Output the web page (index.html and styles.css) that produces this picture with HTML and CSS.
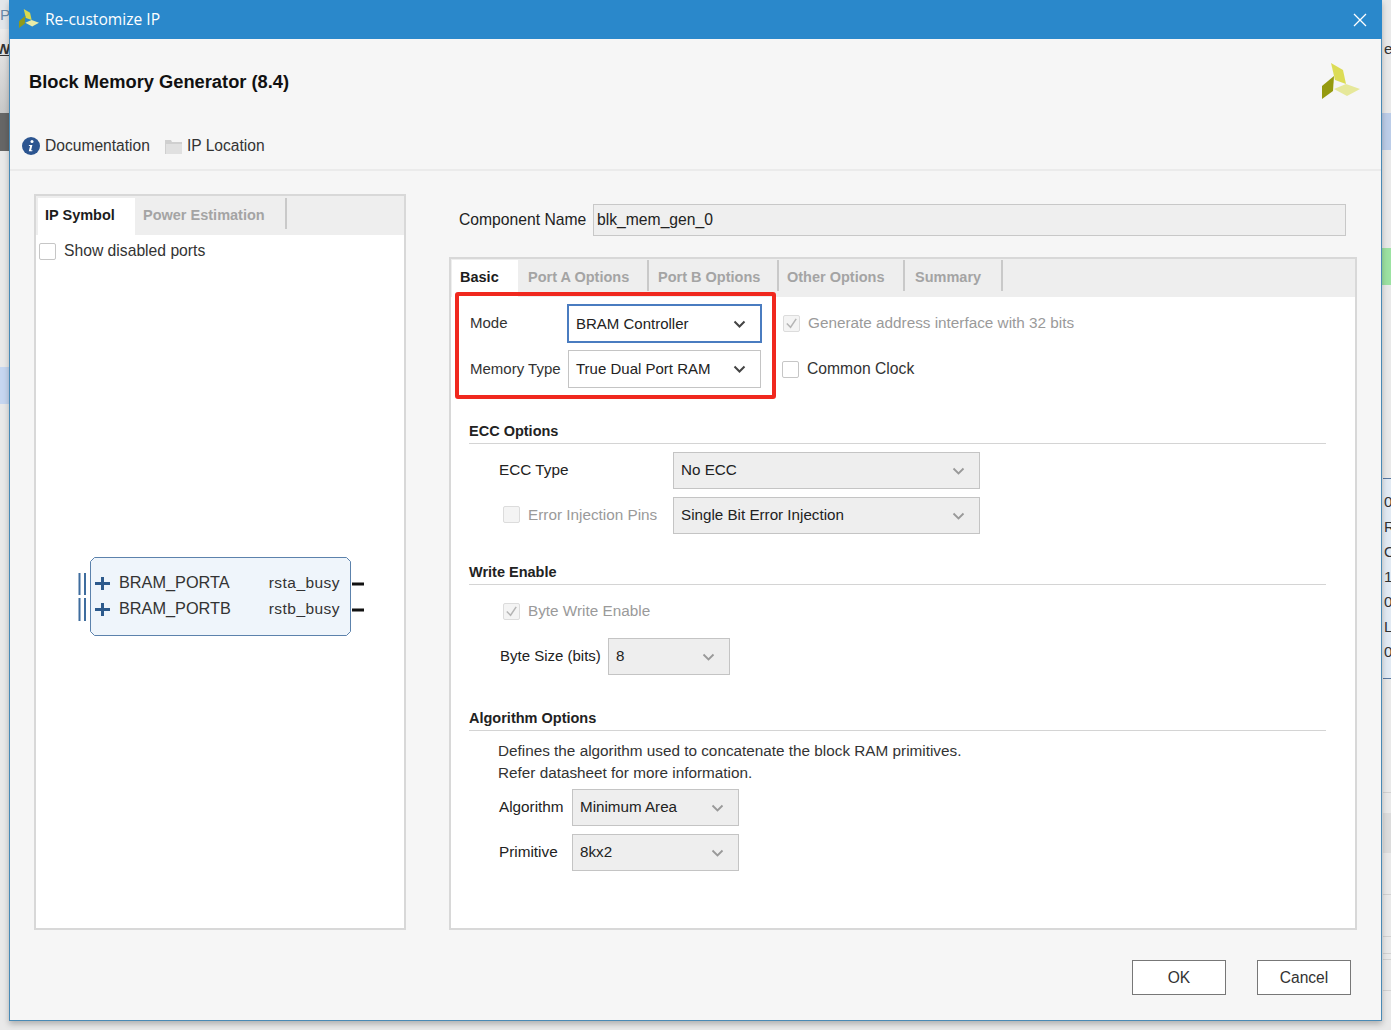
FILE: index.html
```html
<!DOCTYPE html>
<html lang="en">
<head>
  <meta charset="UTF-8">
  <title>Re-customize IP</title>
  <link rel="stylesheet" href="styles.css">
</head>
<body>
  <!-- bits of the main window showing behind the dialog -->
  <div class="bg-bit left-p">P</div>
  <div class="bg-bit left-top"></div>
  <div class="bg-bit left-wi">Wi</div>
  <div class="bg-bit left-dark"></div>
  <div class="bg-bit left-blue"></div>
  <div class="bg-bit right-e">e</div>
  <div class="bg-bit right-blue"></div>
  <div class="bg-bit right-green"></div>
  <div class="bg-bit right-table">0<br>R<br>O<br>1<br>0<br>L<br>0</div>
  <div class="bg-bit right-rule rule-a"></div>
  <div class="bg-bit right-band"></div>
  <div class="bg-bit right-rule rule-b"></div>
  <div class="bg-bit right-rule rule-c"></div>

  <div class="dialog">
    <div class="titlebar">
      <svg class="title-logo" viewBox="0 0 38 36">
        <path d="M9 0l12 7 3 14-11-4z" fill="#d9da50"/>
        <path d="M0 23l12-10-1 15-11 8z" fill="#8f9a1c"/>
        <path d="M12 26l12-5 14 5-13 7z" fill="#e8eca8"/>
      </svg>
      <span class="title-text">Re-customize IP</span>
      <svg class="title-close" viewBox="0 0 14 14">
        <path d="M1 1l12 12M13 1L1 13" stroke="#fff" stroke-width="1.3" fill="none"/>
      </svg>
    </div>

    <div class="header">
      <div class="header-top">
        <h1>Block Memory Generator (8.4)</h1>
        <svg class="big-logo" viewBox="0 0 38 36">
          <path d="M9 0l12 7 3 14-11-4z" fill="#dcdc55"/>
          <path d="M0 23l12-10-1 15-11 8z" fill="#959a10"/>
          <path d="M12 26l12-5 14 5-13 7z" fill="#e6e89a"/>
        </svg>
      </div>
      <div class="header-links">
        <span class="link">
          <svg class="info-icon" viewBox="0 0 18 18">
            <circle cx="9" cy="9" r="9" fill="#2c5590"/>
            <circle cx="10" cy="4.6" r="1.5" fill="#fff"/>
            <path d="M7 8h3.4l-1.300 5.300h1.400l-.3 1H6.800l1.300-5.300H6.800z" fill="#fff"/>
          </svg>
          Documentation
        </span>
        <span class="link">
          <svg class="folder-icon" viewBox="0 0 17 15">
            <path d="M0 1h6l1 2h10v12H0z" fill="#cfcfcf"/>
            <path d="M1 5h16v10H1z" fill="#e0e0e0"/>
          </svg>
          IP Location
        </span>
      </div>
    </div>

    <div class="main">
      <div class="panel symbol-panel">
        <div class="tabs">
          <div class="tab active">IP Symbol</div>
          <div class="tab sep">Power Estimation</div>
        </div>
        <div class="symbol-body">
          <label class="check roomy"><span class="box"></span>Show disabled ports</label>
          <svg class="symbol" width="300" height="90" viewBox="0 0 300 90">
            <path d="M17.500 6.500H269.500l4 4v70l-4 4H17.500l-4-4v-70z" fill="#eff5fb" stroke="#5c82ac"/>
            <g stroke="#3f6d9e" stroke-width="2">
              <path d="M2.500 22v22M8 22v22M2.500 47v23M8 47v23"/>
            </g>
            <g stroke="#2d5a8c" stroke-width="3">
              <path d="M25.500 26v13M18 32.500h15M25.500 52v13M18 58.500h15"/>
            </g>
            <g stroke="#111" stroke-width="3">
              <path d="M275 33h12M275 59h12"/>
            </g>
            <text x="42" y="37" class="sym-text">BRAM_PORTA</text>
            <text x="42" y="63" class="sym-text">BRAM_PORTB</text>
            <text x="263" y="37" class="sym-text sym-right">rsta_busy</text>
            <text x="263" y="63" class="sym-text sym-right">rstb_busy</text>
          </svg>
        </div>
      </div>

      <div class="config">
        <div class="name-row roomy">
          <span class="name-label">Component Name</span>
          <div class="name-input">blk_mem_gen_0</div>
        </div>
        <div class="panel config-panel">
          <div class="tabs">
            <div class="tab active basic">Basic</div>
            <div class="tab sep porta">Port A Options</div>
            <div class="tab sep portb">Port B Options</div>
            <div class="tab sep other">Other Options</div>
            <div class="tab sep summary">Summary</div>
          </div>
          <div class="config-body">
            <div class="red-box"></div>

            <div class="mode-block">
              <div class="mode-row">
                <span class="mode-label">Mode</span>
                <div class="select mode-select focused">BRAM Controller<svg class="chev" viewBox="0 0 12 8"><path d="M1 1.500l5 5 5-5" fill="none" stroke="#444" stroke-width="2"/></svg></div>
                <label class="check disabled"><span class="box"><svg viewBox="0 0 16 16"><path d="M3 8l4 4 6-9" fill="none" stroke="#b5b5b5" stroke-width="1.600"/></svg></span>Generate address interface with 32 bits</label>
              </div>
              <div class="mode-row">
                <span class="mode-label">Memory Type</span>
                <div class="select mode-select">True Dual Port RAM<svg class="chev" viewBox="0 0 12 8"><path d="M1 1.500l5 5 5-5" fill="none" stroke="#444" stroke-width="2"/></svg></div>
                <label class="check roomy"><span class="box"></span>Common Clock</label>
              </div>
            </div>

            <section class="ecc">
              <h2>ECC Options</h2>
              <div class="row">
                <span class="ecc-label">ECC Type</span>
                <div class="select gray ecc-select">No ECC<svg class="chev" viewBox="0 0 12 8"><path d="M1 1.500l5 5 5-5" fill="none" stroke="#999" stroke-width="1.800"/></svg></div>
              </div>
              <div class="row">
                <label class="check disabled ecc-label inset"><span class="box"></span>Error Injection Pins</label>
                <div class="select gray ecc-select">Single Bit Error Injection<svg class="chev" viewBox="0 0 12 8"><path d="M1 1.500l5 5 5-5" fill="none" stroke="#999" stroke-width="1.800"/></svg></div>
              </div>
            </section>

            <section class="write">
              <h2>Write Enable</h2>
              <label class="check disabled inset byte-check"><span class="box"><svg viewBox="0 0 16 16"><path d="M3 8l4 4 6-9" fill="none" stroke="#b5b5b5" stroke-width="1.600"/></svg></span>Byte Write Enable</label>
              <div class="row byte-row">
                <span class="byte-label">Byte Size (bits)</span>
                <div class="select gray byte-select">8<svg class="chev" viewBox="0 0 12 8"><path d="M1 1.500l5 5 5-5" fill="none" stroke="#999" stroke-width="1.800"/></svg></div>
              </div>
            </section>

            <section class="algo">
              <h2>Algorithm Options</h2>
              <p>Defines the algorithm used to concatenate the block RAM primitives.<br>Refer datasheet for more information.</p>
              <div class="row">
                <span class="algo-label">Algorithm</span>
                <div class="select gray algo-select">Minimum Area<svg class="chev" viewBox="0 0 12 8"><path d="M1 1.500l5 5 5-5" fill="none" stroke="#999" stroke-width="1.800"/></svg></div>
              </div>
              <div class="row">
                <span class="algo-label">Primitive</span>
                <div class="select gray algo-select">8kx2<svg class="chev" viewBox="0 0 12 8"><path d="M1 1.500l5 5 5-5" fill="none" stroke="#999" stroke-width="1.800"/></svg></div>
              </div>
            </section>
          </div>
        </div>
      </div>
    </div>

    <div class="footer">
      <button>OK</button>
      <button>Cancel</button>
    </div>
  </div>
</body>
</html>
```

FILE: styles.css
```css
* {
  box-sizing: border-box;
}

html, body {
  height: 100%;
}

body {
  margin: 0;
  background: #e9e9e9;
  overflow: hidden;
  position: relative;
  font-family: "Liberation Sans", Arial, sans-serif;
  font-size: 15.300px;
  color: #222;
}

.roomy {
  font-size: 15.700px;
}

/* main window behind the dialog */
.bg-bit {
  position: absolute;
  color: #333;
}

.left-p {
  left: 0;
  top: 0;
  width: 20px;
  height: 29px;
  line-height: 29px;
  background: #e3e6ea;
  color: #6a8aa8;
}

.left-top {
  left: 0;
  top: 29px;
  width: 20px;
  height: 84px;
  background: linear-gradient(#ececec, #c8c8c8);
}

.left-wi {
  left: -4px;
  top: 40px;
  font-weight: bold;
  text-decoration: underline;
}

.left-dark {
  left: 0;
  top: 113px;
  width: 20px;
  height: 38px;
  background: #666;
}

.left-blue {
  left: 0;
  top: 367px;
  width: 20px;
  height: 37px;
  background: #c6d6f0;
}

.right-e {
  left: 1384px;
  top: 40px;
}

.right-blue {
  left: 1370px;
  top: 113px;
  width: 21px;
  height: 37px;
  background: #bccde8;
}

.right-green {
  left: 1370px;
  top: 248px;
  width: 21px;
  height: 37px;
  background: #9ce2a2;
}

.right-table {
  left: 1383px;
  top: 478px;
  width: 8px;
  height: 201px;
  padding: 10px 0 0 1px;
  line-height: 25px;
  overflow: hidden;
  background: #e2eaf3;
  border-top: 1px solid #5878a0;
  border-bottom: 1px solid #5878a0;
}

.right-rule {
  left: 1383px;
  width: 8px;
  border-top: 1px solid #d2d2d2;
  border-bottom: 1px solid #d2d2d2;
}

.rule-a {
  top: 792px;
  height: 103px;
}

.rule-b {
  top: 936px;
  height: 18px;
}

.rule-c {
  top: 959px;
  height: 32px;
}

.right-band {
  left: 1383px;
  top: 813px;
  width: 8px;
  height: 40px;
  background: #dcdcdc;
}

.dialog {
  position: absolute;
  left: 9px;
  top: 0;
  width: 1373px;
  height: 1021px;
  background: #f6f6f6;
  border: 1px solid #4a8ab5;
  border-top: 0;
  box-shadow: 0 3px 6px rgba(0, 0, 0, 0.25);
  display: flex;
  flex-direction: column;
}

.titlebar {
  height: 39px;
  margin: 0 -1px;
  background: #2a88cb;
  color: #fff;
  display: flex;
  align-items: center;
  padding: 0 15px 0 10px;
  flex: none;
}

.title-logo {
  width: 20px;
  height: 19px;
  margin-right: 6px;
  margin-top: -2px;
}

.title-text {
  font-family: "Open Sans", sans-serif;
  font-size: 15.600px;
  margin-top: -1px;
  flex: 1;
}

.title-close {
  width: 14px;
  height: 14px;
  margin-top: 1px;
}

.header {
  height: 132px;
  flex: none;
  padding: 0 21px 0 12px;
  border-bottom: 2px solid #ebebeb;
  display: flex;
  flex-direction: column;
}

.header-top {
  display: flex;
  justify-content: space-between;
  align-items: flex-start;
  padding: 24px 0 0 7px;
  height: 92px;
}

.header-top h1 {
  margin: 8px 0 0;
  font-size: 18.300px;
  font-weight: bold;
  color: #111;
  line-height: 21px;
}

.big-logo {
  width: 38px;
  height: 36px;
}

.header-links {
  display: flex;
  gap: 15px;
  height: 30px;
  align-items: center;
  font-size: 15.600px;
}

.link {
  display: flex;
  align-items: center;
  gap: 5px;
  color: #333;
}

.info-icon {
  width: 18px;
  height: 18px;
}

.folder-icon {
  width: 17px;
  height: 15px;
}

.main {
  display: flex;
  padding: 23px 24px 0 24px;
  height: 759px;
  flex: none;
}

.panel {
  border: 2px solid #d8d8d8;
  background: #fff;
  display: flex;
  flex-direction: column;
}

.symbol-panel {
  width: 372px;
  height: 736px;
  margin-right: 43px;
  flex: none;
}

.tabs {
  height: 39px;
  flex: none;
  background: #eee;
  display: flex;
  padding: 2px 0 0 2px;
  font-size: 14.500px;
  font-weight: bold;
  color: #a4a4a4;
}

.tab {
  line-height: 34px;
  padding: 0 8px;
  white-space: nowrap;
  position: relative;
}

.tab.active {
  background: #fff;
  color: #1c1c1c;
}

.tab.sep::after {
  content: "";
  position: absolute;
  right: 0;
  top: 0;
  bottom: 6px;
  width: 2px;
  background: #c9c9c9;
}

.symbol-panel .tab.active {
  width: 97px;
  padding-left: 7px;
}

.symbol-panel .tab.sep {
  width: 152px;
}

.symbol-body {
  flex: 1;
  padding: 7px 3px;
}

.check {
  display: flex;
  align-items: center;
  gap: 8px;
  color: #333;
  height: 18px;
}

.check.disabled {
  color: #9a9a9a;
}

.box {
  width: 17px;
  height: 17px;
  background: #fff;
  border: 1px solid #c6c6c6;
  border-radius: 2px;
  flex: none;
  display: block;
}

.box svg {
  display: block;
  width: 15px;
  height: 15px;
}

.disabled .box {
  background: #f4f4f4;
  border-color: #dcdcdc;
}

.symbol {
  display: block;
  margin: 291px 0 0 38px;
}

.sym-text {
  font-family: "Liberation Sans", Arial, sans-serif;
  font-size: 16.300px;
  fill: #333;
}

.sym-right {
  font-size: 15.500px;
  letter-spacing: 0.45px;
  text-anchor: end;
}

.config {
  flex: 1;
  display: flex;
  flex-direction: column;
}

.name-row {
  display: flex;
  align-items: center;
  height: 63px;
  padding: 10px 11px 21px 10px;
  gap: 7px;
}

.name-label {
  width: 127px;
  white-space: nowrap;
  flex: none;
}

.name-input {
  flex: 1;
  height: 32px;
  line-height: 30px;
  padding-left: 3px;
  background: #efefef;
  border: 1px solid #c8c8c8;
}

.config-panel {
  height: 673px;
}

.config-panel .tabs {
  height: 38px;
  padding: 1px 0 0 1px;
}

.tab.basic {
  width: 66px;
}

.tab.porta {
  width: 131px;
  padding-left: 10px;
}

.tab.portb {
  width: 130px;
  padding-left: 9px;
}

.tab.other {
  width: 126px;
}

.tab.summary {
  width: 98px;
  padding-left: 10px;
}

.config-body {
  position: relative;
  flex: 1;
  padding: 7px 0 0 18px;
}

.red-box {
  position: absolute;
  left: 4px;
  top: -5px;
  width: 321px;
  height: 107px;
  border: 4px solid #f0281e;
  border-radius: 3px;
}

.select {
  position: relative;
  height: 37px;
  line-height: 34px;
  padding-left: 7px;
  border: 1px solid #c4c4c4;
  background: #fff;
  color: #222;
  font-size: 15.200px;
}

.select.gray {
  background: #eee;
}

.select.mode-select {
  height: 38px;
  line-height: 36px;
  font-size: 15px;
}

.select.focused {
  border: 2px solid #4a7cc0;
  height: 39px;
  line-height: 35px;
  margin-left: -1px;
  width: 195px;
  align-self: flex-start;
}

.chev {
  position: absolute;
  right: 14px;
  top: 14px;
  width: 13px;
  height: 8px;
}

.mode-block {
  display: flex;
  flex-direction: column;
  gap: 8px;
  margin-left: 1px;
}

.mode-row {
  display: flex;
  align-items: center;
  height: 38px;
}

.mode-label {
  width: 98px;
  color: #333;
  flex: none;
  font-size: 15px;
  white-space: nowrap;
  margin-bottom: 2px;
}

.mode-select {
  width: 193px;
  flex: none;
}

.mode-row .check {
  margin-left: 21px;
}

section h2 {
  margin: 0 29px 8px 0;
  font-size: 14.500px;
  font-weight: bold;
  color: #222;
  height: 21px;
  line-height: 17px;
  border-bottom: 1px solid #d4d4d4;
}

.row {
  display: flex;
  align-items: center;
}

.ecc {
  margin-top: 35px;
}

.ecc .row {
  margin-bottom: 8px;
  padding-left: 30px;
}

.ecc-label {
  width: 174px;
  flex: none;
  margin-bottom: 2px;
}

.ecc-select {
  width: 307px;
}

.inset {
  margin-left: 4px;
}

.ecc .inset {
  width: 170px;
}

.write {
  margin-top: 30px;
}

.byte-check {
  margin: 0 0 0 34px;
  height: 36px;
}

.byte-row {
  margin-top: 9px;
  padding-left: 31px;
}

.byte-label {
  width: 108px;
  flex: none;
  font-size: 15px;
  margin-bottom: 2px;
}

.byte-select {
  width: 122px;
}

.algo {
  margin-top: 35px;
}

.algo p {
  margin: 9px 0 5px;
  padding-left: 29px;
  line-height: 22px;
  color: #333;
}

.algo .row {
  padding-left: 30px;
  margin-bottom: 8px;
}

.algo-label {
  width: 73px;
  flex: none;
  margin-bottom: 2px;
}

.algo-select {
  width: 167px;
}

.footer {
  flex: 1;
  display: flex;
  justify-content: flex-end;
  gap: 31px;
  padding: 30px 30px 0 0;
}

button {
  width: 94px;
  height: 35px;
  background: #fff;
  border: 1px solid #777;
  font-family: inherit;
  font-size: 15.600px;
  color: #333;
  padding: 0;
}
```
